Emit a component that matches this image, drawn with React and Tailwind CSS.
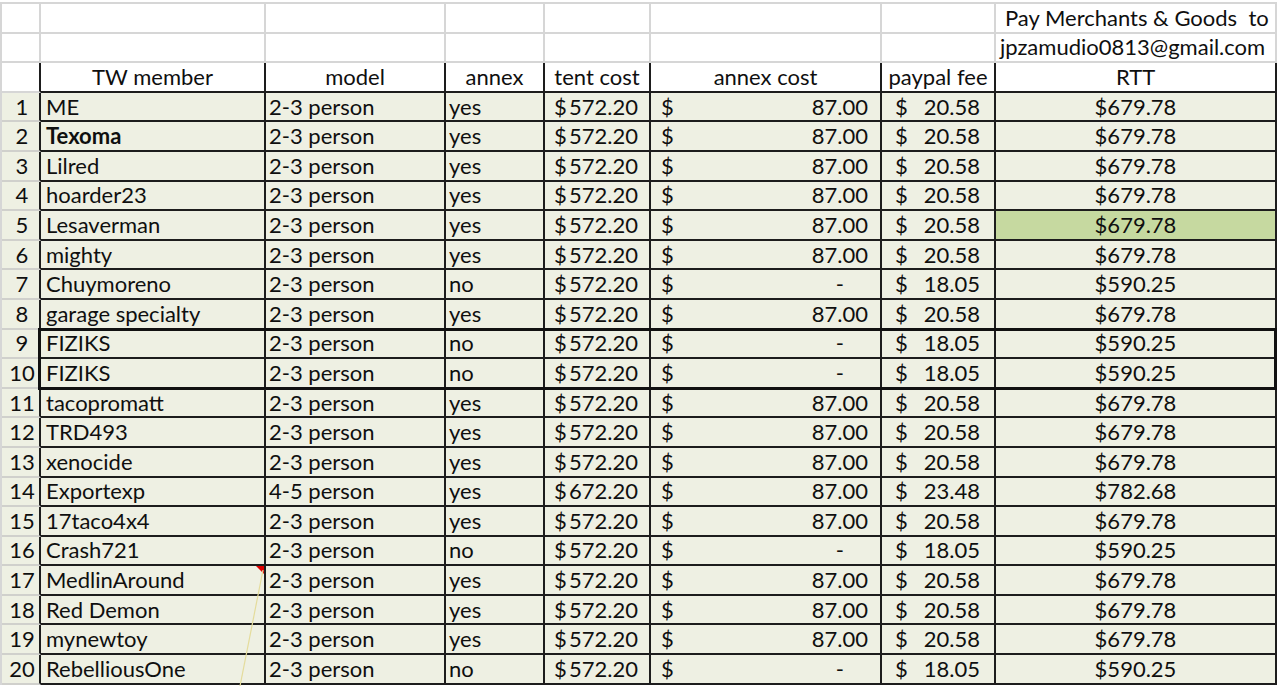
const COLS = "grid grid-cols-[39px_225px_180px_99px_106px_231px_114px_281px]"

const rows = [
    ["ME", "2-3 person", "yes", "572.20", "87.00", "20.58", "$679.78"],
    ["Texoma", "2-3 person", "yes", "572.20", "87.00", "20.58", "$679.78"],
    ["Lilred", "2-3 person", "yes", "572.20", "87.00", "20.58", "$679.78"],
    ["hoarder23", "2-3 person", "yes", "572.20", "87.00", "20.58", "$679.78"],
    ["Lesaverman", "2-3 person", "yes", "572.20", "87.00", "20.58", "$679.78"],
    ["mighty", "2-3 person", "yes", "572.20", "87.00", "20.58", "$679.78"],
    ["Chuymoreno", "2-3 person", "no", "572.20", "-", "18.05", "$590.25"],
    ["garage specialty", "2-3 person", "yes", "572.20", "87.00", "20.58", "$679.78"],
    ["FIZIKS", "2-3 person", "no", "572.20", "-", "18.05", "$590.25"],
    ["FIZIKS", "2-3 person", "no", "572.20", "-", "18.05", "$590.25"],
    ["tacopromatt", "2-3 person", "yes", "572.20", "87.00", "20.58", "$679.78"],
    ["TRD493", "2-3 person", "yes", "572.20", "87.00", "20.58", "$679.78"],
    ["xenocide", "2-3 person", "yes", "572.20", "87.00", "20.58", "$679.78"],
    ["Exportexp", "4-5 person", "yes", "672.20", "87.00", "23.48", "$782.68"],
    ["17taco4x4", "2-3 person", "yes", "572.20", "87.00", "20.58", "$679.78"],
    ["Crash721", "2-3 person", "no", "572.20", "-", "18.05", "$590.25"],
    ["MedlinAround", "2-3 person", "yes", "572.20", "87.00", "20.58", "$679.78"],
    ["Red Demon", "2-3 person", "yes", "572.20", "87.00", "20.58", "$679.78"],
    ["mynewtoy", "2-3 person", "yes", "572.20", "87.00", "20.58", "$679.78"],
    ["RebelliousOne", "2-3 person", "no", "572.20", "-", "18.05", "$590.25"],
]

// black cell edge used for everything inside the table
const cell = "flex items-center border-r-2 border-b-2 border-[#1d1d1d]"
// light grid of the empty sheet area
const gridCell = "flex items-center border-r-2 border-b-2 border-[#d6d6d6]"

const TopRow = ({ text, pad }) => (
    <div className={`${COLS} h-[29.6px]`}>
        {[0, 1, 2, 3, 4, 5, 6].map((i) => (
            <div key={i} className={gridCell} />
        ))}
        <div className={`${gridCell} ${pad} whitespace-pre overflow-visible`}>
            {text}
        </div>
    </div>
)

const HeaderRow = () => {
    const labels = ["TW member", "model", "annex", "tent cost", "annex cost", "paypal fee", "RTT"]
    return (
        <div className={`${COLS} h-[29.6px] bg-white`}>
            <div className="border-r-2 border-b-2 border-r-[#1d1d1d] border-b-[#d6d6d6]" />
            {labels.map((l) => (
                <div key={l} className={`${cell} justify-center`}>
                    {l}
                </div>
            ))}
        </div>
    )
}

const DataRow = ({ n, r }) => {
    const [member, model, annex, tent, annexCost, fee, rtt] = r
    return (
        <div className={`${COLS} h-[29.6px] bg-[#eef0e3]`}>
            <div className="flex items-center justify-center border-r-2 border-r-[#1d1d1d] border-b-2 border-b-[#d0d0cc] pl-[3px]">
                {n}
            </div>
            <div className={`${cell} pl-[5px] relative ${member === "Texoma" ? "font-bold" : ""}`}>
                {member}
                {n === 17 && (
                    <span className="absolute top-0 right-0 w-0 h-0 border-t-[8px] border-t-[#e00000] border-l-[8px] border-l-transparent" />
                )}
            </div>
            <div className={`${cell} pl-[3px]`}>{model}</div>
            <div className={`${cell} pl-[3px]`}>{annex}</div>
            <div className={`${cell} justify-between pl-[9px] pr-[11px]`}>
                <span>$</span>
                <span>{tent}</span>
            </div>
            <div className={`${cell} justify-between pl-[10px] ${annexCost === "-" ? "pr-[36px]" : "pr-[12px]"}`}>
                <span>$</span>
                <span>{annexCost}</span>
            </div>
            <div className={`${cell} justify-between pl-[13px] pr-[14px]`}>
                <span>$</span>
                <span>{fee}</span>
            </div>
            <div className={`${cell} justify-center ${n === 5 ? "bg-[#c6d9a0]" : ""}`}>{rtt}</div>
        </div>
    )
}

export default function App() {
    return (
        <div className="relative w-[1279px] h-[686px] overflow-hidden bg-white text-[22px] leading-none text-[#0f0f0f] font-['Lato',sans-serif]">
            <div className="mt-[2px] border-t-2 border-l-2 border-[#d6d6d6] w-[1277px]">
                <TopRow text="Pay Merchants & Goods  to" pad="pl-[9px]" />
                <TopRow text="jpzamudio0813@gmail.com" pad="pl-[4px]" />
                <HeaderRow />
                {rows.slice(0, 8).map((r, i) => (
                    <DataRow key={i} n={i + 1} r={r} />
                ))}
                {/* FIZIKS pair has a heavy outline */}
                <div className="relative">
                    {rows.slice(8, 10).map((r, i) => (
                        <DataRow key={i} n={i + 9} r={r} />
                    ))}
                    <div className="pointer-events-none absolute left-[36px] right-0 top-[-2px] bottom-[-1px] border-[3px] border-[#111]" />
                </div>
                {rows.slice(10).map((r, i) => (
                    <DataRow key={i} n={i + 11} r={r} />
                ))}
            </div>
            {/* comment connector line */}
            <svg className="pointer-events-none absolute left-0 top-0" width="1279" height="686">
                <line x1="263" y1="570" x2="240" y2="686" stroke="#e4dc9c" strokeWidth="1.2" />
            </svg>
        </div>
    )
}
